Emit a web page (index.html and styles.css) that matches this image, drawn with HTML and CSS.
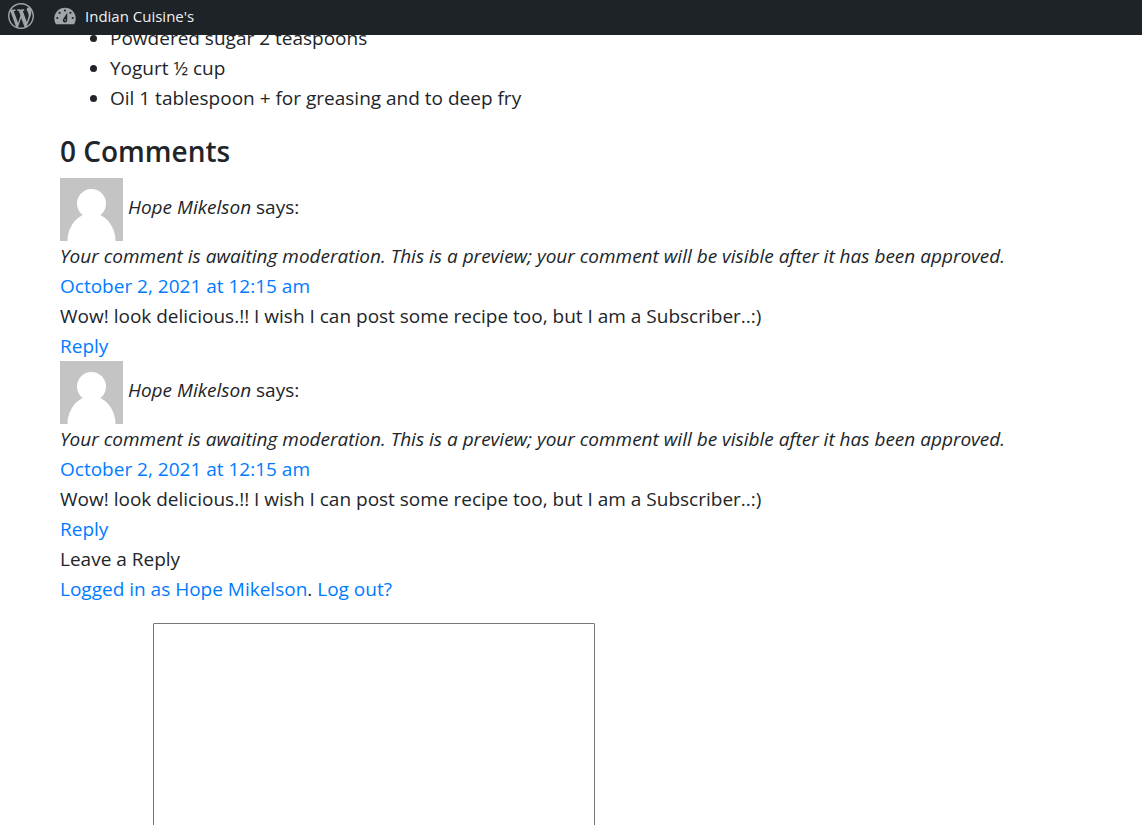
FILE: index.html
```html
<!DOCTYPE html>
<html lang="en">
<head>
<meta charset="utf-8">
<meta name="viewport" content="width=device-width, initial-scale=1">
<title>Indian Cuisine's</title>
<link rel="stylesheet" href="styles.css">
</head>
<body>
<nav class="adminbar" aria-label="Toolbar">
  <a class="adminbar-link" href="#" aria-label="WordPress">
    <svg class="wp-logo" viewBox="0 0 20 20" aria-hidden="true"><path d="M20 10c0-5.510-4.490-10-10-10C4.480 0 0 4.490 0 10c0 5.520 4.480 10 10 10 5.510 0 10-4.480 10-10zM7.780 15.370L4.370 6.220c.55-.02 1.170-.08 1.170-.08.5-.06.44-1.130-.06-1.110 0 0-1.450.11-2.370.11-.18 0-.37 0-.58-.01C4.120 2.690 6.870 1.110 10 1.110c2.330 0 4.450.87 6.050 2.340-.68-.11-1.650.39-1.650 1.580 0 .74.45 1.360.9 2.100.35.61.55 1.360.55 2.460 0 1.490-1.400 5-1.400 5l-3.030-8.370c.54-.02.82-.17.82-.17.5-.05.44-1.250-.06-1.220 0 0-1.440.12-2.380.12-.87 0-2.330-.12-2.330-.12-.5-.03-.56 1.200-.06 1.220l.92.08 1.260 3.410zM17.410 10c.24-.64.74-1.870.43-4.250.7 1.290 1.050 2.710 1.050 4.250 0 3.290-1.730 6.240-4.400 7.780.97-2.590 1.940-5.200 2.920-7.780zM6.100 18.090C3.120 16.650 1.110 13.530 1.110 10c0-1.300.23-2.480.72-3.590C3.250 10.300 4.670 14.200 6.100 18.090zm4.030-6.630l2.580 6.980c-.86.29-1.760.45-2.710.45-.79 0-1.570-.11-2.290-.33.81-2.380 1.620-4.740 2.420-7.100z"/><path class="wp-disc" d="M5.500 6.200l3.400 9.200 1.700-5L9.100 6.200zM11.900 6.200l3 8.400 1.200-4.200c0-1.800-1.600-3.200-1.600-5z"/></svg>
  </a>
  <a class="adminbar-link" href="#">
    <svg class="gauge" viewBox="0 0 22 18" aria-hidden="true">
      <path d="M2 17.200C.9 15.600.3 13.500.3 11.400.3 5.400 5.100.7 11 .7s10.700 4.700 10.700 10.700c0 2.100-.6 4.200-1.700 5.800z"/>
      <g class="gauge-cut"><circle cx="11" cy="3.500" r="1.100"/><circle cx="5.600" cy="5.800" r="1.100"/><circle cx="16.400" cy="5.800" r="1.100"/><circle cx="3.300" cy="11" r="1.100"/><circle cx="18.700" cy="11" r="1.100"/><path d="M13.300 5.700l-.1 7.600a2.200 2.200 0 1 1-4-1.200z"/></g><circle cx="11.200" cy="13" r=".8"/>
    </svg>
    <span>Indian Cuisine's</span>
  </a>
</nav>
<main class="content">
  <ul class="ingredients">
    <li>Powdered sugar 2 teaspoons</li>
    <li>Yogurt ½ cup</li>
    <li>Oil 1 tablespoon + for greasing and to deep fry</li>
  </ul>
  <h2 class="comments-title">0 Comments</h2>
  <article class="comment">
    <div class="author">
      <svg class="avatar" viewBox="0 0 63 63" role="img" aria-label="Avatar"><path class="avatar-bg" d="M0 0h63v63H0z"/><g class="avatar-person"><circle cx="31.500" cy="25.500" r="14.500"/><ellipse cx="31.500" cy="63" rx="24" ry="28"/></g></svg>
      <span><cite>Hope Mikelson</cite> says:</span>
    </div>
    <em>Your comment is awaiting moderation. This is a preview; your comment will be visible after it has been approved.</em>
    <div><a href="#">October 2, 2021 at 12:15 am</a></div>
    <p>Wow! look delicious.!! I wish I can post some recipe too, but I am a Subscriber..:)</p>
    <div><a href="#">Reply</a></div>
  </article>
  <article class="comment">
    <div class="author">
      <svg class="avatar" viewBox="0 0 63 63" role="img" aria-label="Avatar"><path class="avatar-bg" d="M0 0h63v63H0z"/><g class="avatar-person"><circle cx="31.500" cy="25.500" r="14.500"/><ellipse cx="31.500" cy="63" rx="24" ry="28"/></g></svg>
      <span><cite>Hope Mikelson</cite> says:</span>
    </div>
    <em>Your comment is awaiting moderation. This is a preview; your comment will be visible after it has been approved.</em>
    <div><a href="#">October 2, 2021 at 12:15 am</a></div>
    <p>Wow! look delicious.!! I wish I can post some recipe too, but I am a Subscriber..:)</p>
    <div><a href="#">Reply</a></div>
  </article>
  <form class="reply-form">
    <div>Leave a Reply</div>
    <p><a href="#">Logged in as Hope Mikelson</a>. <a href="#">Log out?</a></p>
    <textarea class="reply-text" aria-label="Comment" rows="8" cols="45"></textarea>
  </form>
</main>
</body>
</html>
```
FILE: styles.css
```css
* { box-sizing: border-box; }
body {
  margin: 0;
  background: #fff;
  color: #212529;
  font: 19px/30px "Segoe UI", "Open Sans", "Noto Sans", sans-serif;
}
html { overflow: hidden; }
a { color: #007bff; text-decoration: none; }
p { margin: 0; }

.adminbar {
  position: fixed;
  top: 0;
  left: 0;
  right: 0;
  z-index: 1;
  display: flex;
  gap: 20px;
  height: 35px;
  padding: 0 8px;
  background: #1d2327;
}
.adminbar-link {
  display: flex;
  align-items: center;
  gap: 9px;
  padding-bottom: 3px;
  color: #f0f0f1;
  font-size: 15px;
}
.wp-logo { width: 26px; height: 26px; fill: #a1a5a9; }
.wp-disc { fill: none; }
.gauge { width: 22px; height: 18px; fill: #a1a5a9; }
.gauge-cut { fill: #1d2327; }

.content { padding: 23px 60px; }
.ingredients { margin: 0 0 20px; padding-left: 50px; }
.comments-title {
  margin: 0 0 8px;
  font-size: 28px;
  font-weight: 600;
  line-height: 37px;
}
.comment em { display: block; }
.author { display: flex; gap: 5px; }
.author span { padding-top: 14px; }
.avatar { width: 63px; height: 63px; }
.avatar-bg { fill: #c4c4c4; }
.avatar-person { fill: #fff; }

.reply-text {
  display: block;
  width: 442px;
  max-width: calc(100% - 93px);
  height: 242px;
  margin: 19px 0 0 93px;
  border: 1px solid #767676;
  border-radius: 1px;
  resize: none;
  font: inherit;
}
```
